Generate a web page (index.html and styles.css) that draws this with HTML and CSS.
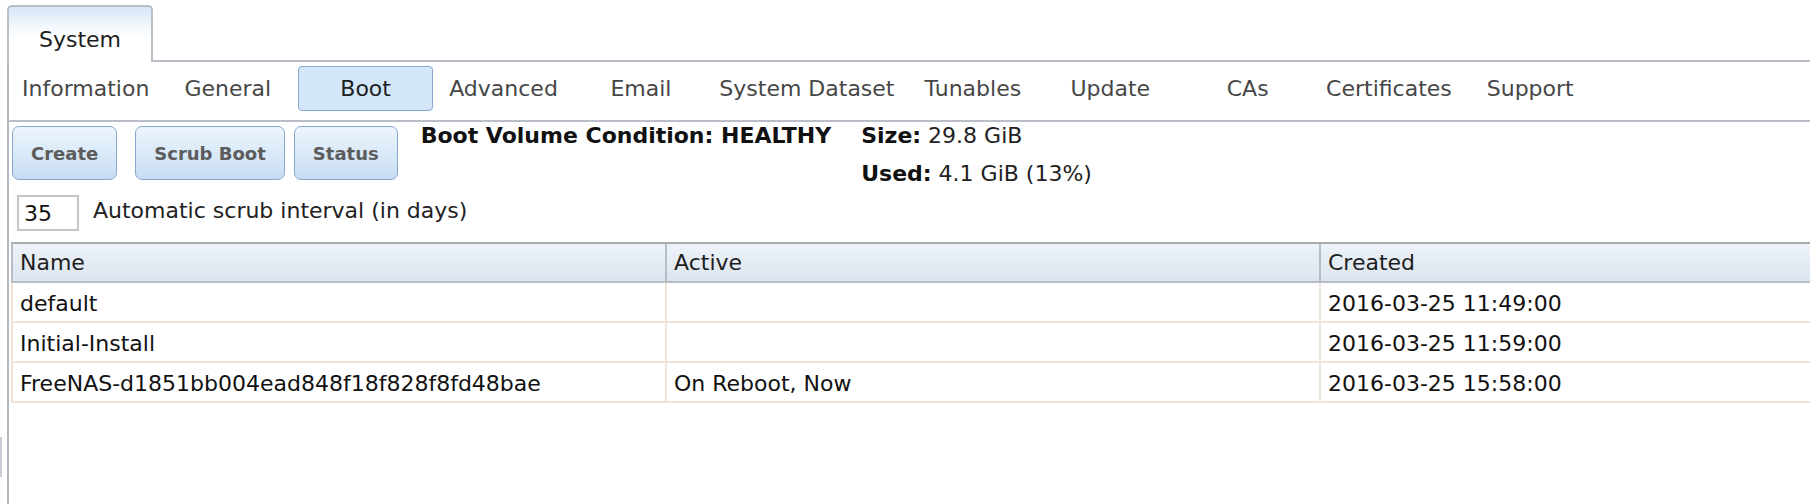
FILE: index.html
```html
<!DOCTYPE html>
<html lang="en">
<head>
<meta charset="utf-8">
<title>System - Boot</title>
<link rel="stylesheet" href="styles.css">
</head>
<body>
<div class="top">
  <div class="systab">System</div>
  <div class="top-fill"></div>
</div>
<div class="content">
  <div class="subtabs">
    <div class="subtab">Information</div>
    <div class="subtab">General</div>
    <div class="subtab active">Boot</div>
    <div class="subtab">Advanced</div>
    <div class="subtab">Email</div>
    <div class="subtab">System Dataset</div>
    <div class="subtab">Tunables</div>
    <div class="subtab">Update</div>
    <div class="subtab">CAs</div>
    <div class="subtab">Certificates</div>
    <div class="subtab">Support</div>
  </div>
  <div class="toolbar">
    <button class="btn btn-create">Create</button>
    <button class="btn btn-scrub">Scrub Boot</button>
    <button class="btn btn-status">Status</button>
    <div class="condition">Boot Volume Condition: HEALTHY</div>
    <div class="sizes">
      <div class="size-line"><b>Size:</b> 29.8 GiB</div>
      <div class="size-line"><b>Used:</b> 4.1 GiB (13%)</div>
    </div>
  </div>
  <div class="interval">
    <div class="interval-input">35</div>
    <div class="interval-label">Automatic scrub interval (in days)</div>
  </div>
  <div class="grid-wrap">
    <table class="grid">
      <colgroup>
        <col class="col-name">
        <col class="col-active">
        <col class="col-created">
      </colgroup>
      <thead>
        <tr><th>Name</th><th>Active</th><th>Created</th></tr>
      </thead>
      <tbody>
        <tr><td>default</td><td></td><td>2016-03-25 11:49:00</td></tr>
        <tr><td>Initial-Install</td><td></td><td>2016-03-25 11:59:00</td></tr>
        <tr><td>FreeNAS-d1851bb004ead848f18f828f8fd48bae</td><td>On Reboot, Now</td><td>2016-03-25 15:58:00</td></tr>
      </tbody>
    </table>
  </div>
</div>
<div class="edge-thumb"></div>
</body>
</html>
```
FILE: styles.css
```css
html, body {
  margin: 0;
  padding: 0;
  background: #fff;
}
body {
  width: 1810px;
  height: 504px;
  overflow: hidden;
  position: relative;
  font-family: "DejaVu Sans", Verdana, sans-serif;
  font-size: 22px;
  color: #1a1a1a;
}

/* top tab bar */
.top {
  display: flex;
  align-items: flex-end;
  height: 62px;
  padding-left: 7px;
  box-sizing: border-box;
}
.systab {
  box-sizing: border-box;
  width: 146px;
  height: 57px;
  padding-top: 20px;
  text-align: center;
  border: 2px solid #b9bec8;
  border-bottom: none;
  border-radius: 5px 5px 0 0;
  background: linear-gradient(#d6e5f6 0, #f3f8fd 35%, #fff 60%);
  color: #1e1e1e;
  line-height: normal;
}
.top-fill {
  flex: 1;
  border-bottom: 2px solid #b9bec8;
}

/* content panel */
.content {
  margin-left: 7px;
  border-left: 2px solid #b3b8c0;
  min-height: 442px;
}

.subtabs {
  display: flex;
  box-sizing: border-box;
  height: 60px;
  padding: 4px 0 0 5px;
  border-bottom: 2px solid #b9bec8;
}
.subtab {
  box-sizing: border-box;
  min-width: 134px;
  height: 45px;
  padding: 0 7px;
  margin-right: 3.4px;
  line-height: 43px;
  border: 1px solid transparent;
  border-radius: 4px;
  text-align: center;
  color: #474747;
  white-space: nowrap;
}
.subtab.active {
  min-width: 135px;
  background: #d3e6fa;
  border-color: #86a9cc;
  color: #1e1e1e;
}

/* toolbar */
.toolbar {
  display: flex;
  align-items: flex-start;
  padding-top: 1px;
}
.btn {
  box-sizing: border-box;
  height: 54px;
  margin-top: 3px;
  padding: 0 18px;
  border: 1px solid #86a8cb;
  border-radius: 7px;
  background: linear-gradient(#edf4fc 0, #dcebf9 45%, #c7ddf4 100%);
  font-family: "DejaVu Sans", Verdana, sans-serif;
  font-weight: bold;
  font-size: 18px;
  color: #5c5c5c;
}
.btn-create { margin-left: 3px; }
.btn-scrub { margin-left: 18px; }
.btn-status { margin-left: 9px; }
.condition {
  margin-left: 23px;
  font-weight: bold;
  color: #111;
  white-space: nowrap;
}
.sizes {
  margin-left: 30px;
  color: #222;
}
.size-line {
  margin-bottom: 13px;
  white-space: nowrap;
}
.size-line b { color: #111; }

/* interval */
.interval {
  display: flex;
  align-items: flex-start;
  margin-top: -4px;
  height: 36px;
}
.interval-input {
  box-sizing: border-box;
  width: 62px;
  height: 36px;
  margin-left: 8px;
  padding-left: 5px;
  border: 2px solid #c4c4c4;
  line-height: 33px;
  color: #111;
}
.interval-label {
  margin-left: 14px;
  padding-top: 3px;
  color: #222;
}

/* grid */
.grid-wrap {
  margin-top: 11px;
  margin-left: 2px;
  overflow: hidden;
}
.grid {
  width: 100%;
  table-layout: fixed;
  border-collapse: collapse;
  line-height: 26px;
  font-size: 22px;
}
.col-name { width: 654px; }
.col-active { width: 654px; }
.grid th {
  text-align: left;
  font-weight: normal;
  color: #1e1e1e;
  padding: 6px 7px 5px;
  background: linear-gradient(#eef3f9, #dbe4ee);
  border-top: 2px solid #a9abae;
  border-bottom: 2px solid #b6bdc7;
  border-left: 2px solid #b6bdc7;
}
.grid td {
  padding: 8px 7px 4px;
  color: #111;
  border-bottom: 2px solid #efe4d7;
  border-left: 2px solid #efe4d7;
  white-space: nowrap;
}

.edge-thumb {
  position: absolute;
  left: 0;
  top: 437px;
  width: 2px;
  height: 40px;
  background: #c9ced5;
}
```
